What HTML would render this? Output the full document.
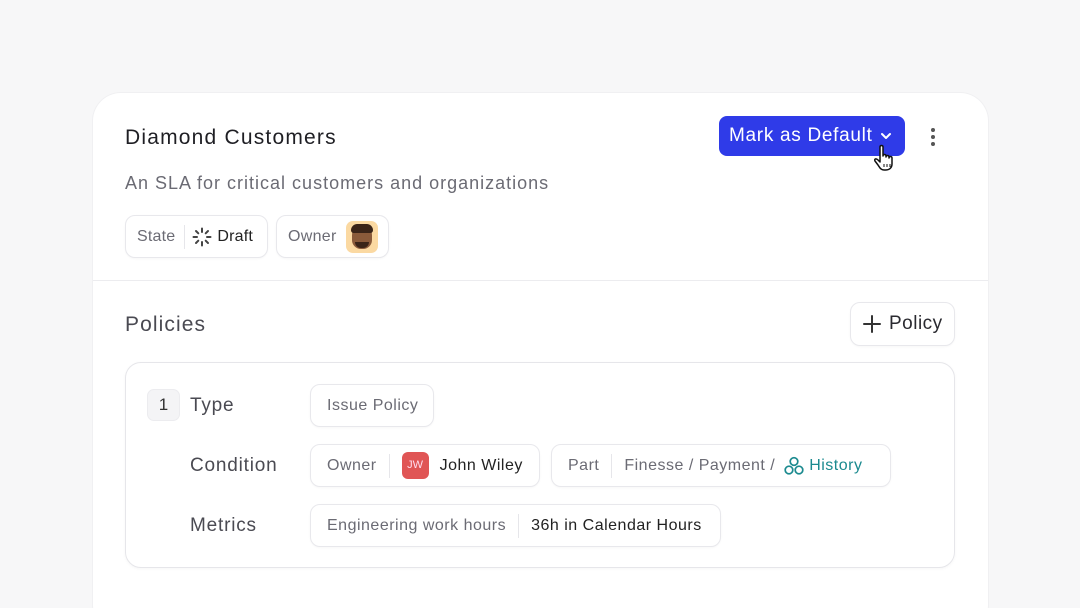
<!DOCTYPE html>
<html><head><meta charset="utf-8"><style>
*{box-sizing:border-box;margin:0;padding:0}
html,body{width:1080px;height:608px;overflow:hidden}
body{background:#f7f7f8;font-family:"Liberation Sans",sans-serif;position:relative;color:#222}
.card{position:absolute;left:93px;top:93px;width:895px;height:540px;background:#fff;border-radius:28px;box-shadow:0 0 0 1px #f0f0f2}
.abs{position:absolute;white-space:nowrap}
.chip{position:absolute;height:43px;border:1px solid #e8e8ec;border-radius:10px;display:flex;align-items:center;font-size:16px;letter-spacing:0.5px;color:#6b6b74;background:#fff;box-shadow:0 1px 2px rgba(0,0,0,.03)}
.sep{width:1px;height:24px;background:#e6e6ea;margin:0 12px}
.dark{color:#222}
.lbl{font-size:19px;color:#4a4a52;letter-spacing:0.8px}
</style></head><body>
<div class="card">
 <div class="abs" style="left:32px;top:33px;font-size:21px;color:#1f1f24;letter-spacing:1.2px">Diamond Customers</div>
 <div class="abs" style="left:32px;top:80px;font-size:18px;color:#6b6b74;letter-spacing:1px">An SLA for critical customers and organizations</div>
 <div class="abs" style="left:626px;top:23px;width:186px;height:40px;background:#2f3be8;border-radius:8px;color:#fff;font-size:19px;line-height:40px;padding-left:10px;letter-spacing:0.7px">Mark as Default
  <svg width="14" height="10" viewBox="0 0 14 10" style="position:absolute;left:160px;top:15px"><path d="M3 3l4 4 4-4" stroke="#fff" stroke-width="2" fill="none" stroke-linecap="round" stroke-linejoin="round"/></svg></div>
 <svg class="abs" style="left:781px;top:51px" width="24" height="28" viewBox="0 0 24 28"><path d="M6 3c0-2 3-2 3 0v9c0-2 3-2 3 0v1c0-2 3-2 3 0v1c0-2 3-2 3 0v6c0 4-3 6-6 6h-2c-3 0-4-2-6-5l-3-4c-1-2 1-3 3-1l2 2z" fill="#fff" stroke="#111" stroke-width="1.5" stroke-linejoin="round"/><path d="M10 20v3M13 20v3M16 20v3" stroke="#111" stroke-width="1"/></svg>
 <div class="abs" style="left:838px;top:35px;width:4px">
  <div style="width:4px;height:4px;border-radius:2px;background:#555;margin-bottom:3px"></div><div style="width:4px;height:4px;border-radius:2px;background:#555;margin-bottom:3px"></div><div style="width:4px;height:4px;border-radius:2px;background:#555"></div></div>
 <div class="chip" style="left:32px;top:122px;width:143px;padding-left:11px;letter-spacing:0.2px">State<div class="sep" style="margin:0 7px 0 9px"></div>
  <svg width="20" height="20" viewBox="0 0 20 20" style="margin-right:5px"><g stroke="#444" stroke-width="2" stroke-linecap="round"><path d="M10 1.5v3.5M10 15v3.5M1.5 10H5M15 10h3.5M4 4l2.3 2.3M13.7 13.7L16 16M16 4l-2.3 2.3M6.3 13.7L4 16"/></g></svg><span class="dark">Draft</span></div>
 <div class="chip" style="left:183px;top:122px;width:113px;padding-left:11px;letter-spacing:0.3px">Owner
  <div style="position:absolute;left:69px;top:5px;width:32px;height:32px;border-radius:7px;background:#fbd9a2;overflow:hidden">
   <div style="position:absolute;left:6px;top:5px;width:20px;height:23px;border-radius:9px;background:#8a5a3a"></div>
   <div style="position:absolute;left:5px;top:3px;width:22px;height:9px;border-radius:9px 9px 4px 4px;background:#3a2418"></div>
   <div style="position:absolute;left:9px;top:21px;width:14px;height:6px;border-radius:0 0 6px 6px;background:#3a2418"></div></div></div>
 <div class="abs" style="left:0;top:187px;width:895px;height:1px;background:#ececef"></div>
 <div class="abs" style="left:32px;top:220px;font-size:21px;color:#4a4a52;letter-spacing:1.1px">Policies</div>
 <div class="chip" style="left:757px;top:209px;width:105px;height:44px;font-size:19px;color:#2a2a30;padding-left:12px;border-radius:10px">
  <svg width="18" height="18" viewBox="0 0 18 18" style="margin-right:8px"><path d="M9 1v16M1 9h16" stroke="#333" stroke-width="2" stroke-linecap="round"/></svg>Policy</div>
 <div class="abs" style="left:32px;top:269px;width:830px;height:206px;border:1px solid #e6e6ea;border-radius:16px;box-shadow:0 1px 3px rgba(0,0,0,.04)"></div>
 <div class="abs" style="left:54px;top:296px;width:33px;height:32px;border-radius:7px;background:#f4f4f6;border:1px solid #ececef;font-size:17px;text-align:center;line-height:30px;color:#333">1</div>
 <div class="abs lbl" style="left:97px;top:302px">Type</div>
 <div class="abs lbl" style="left:97px;top:362px">Condition</div>
 <div class="abs lbl" style="left:97px;top:422px">Metrics</div>
 <div class="chip" style="left:217px;top:291px;width:124px;padding-left:16px">Issue Policy</div>
 <div class="chip" style="left:217px;top:351px;width:230px;padding-left:16px">Owner<div class="sep"></div>
  <div style="width:27px;height:27px;border-radius:6px;background:#e05555;color:#fde;font-size:11px;letter-spacing:0;text-align:center;line-height:27px;margin-right:11px">JW</div><span class="dark">John Wiley</span></div>
 <div class="chip" style="left:458px;top:351px;width:340px;padding-left:16px">Part<div class="sep"></div>Finesse&nbsp;/&nbsp;Payment&nbsp;/&nbsp;
  <svg width="20" height="20" viewBox="0 0 20 20" style="margin:0 5px 0 4px"><g fill="none" stroke="#1b8a8f" stroke-width="1.7"><circle cx="10" cy="5.5" r="3.8"/><circle cx="5" cy="14" r="3.8"/><circle cx="15" cy="14" r="3.8"/></g></svg><span style="color:#1b8a8f">History</span></div>
 <div class="chip" style="left:217px;top:411px;width:411px;padding-left:16px">Engineering work hours<div class="sep"></div><span class="dark">36h in Calendar Hours</span></div>
</div>
</body></html>
